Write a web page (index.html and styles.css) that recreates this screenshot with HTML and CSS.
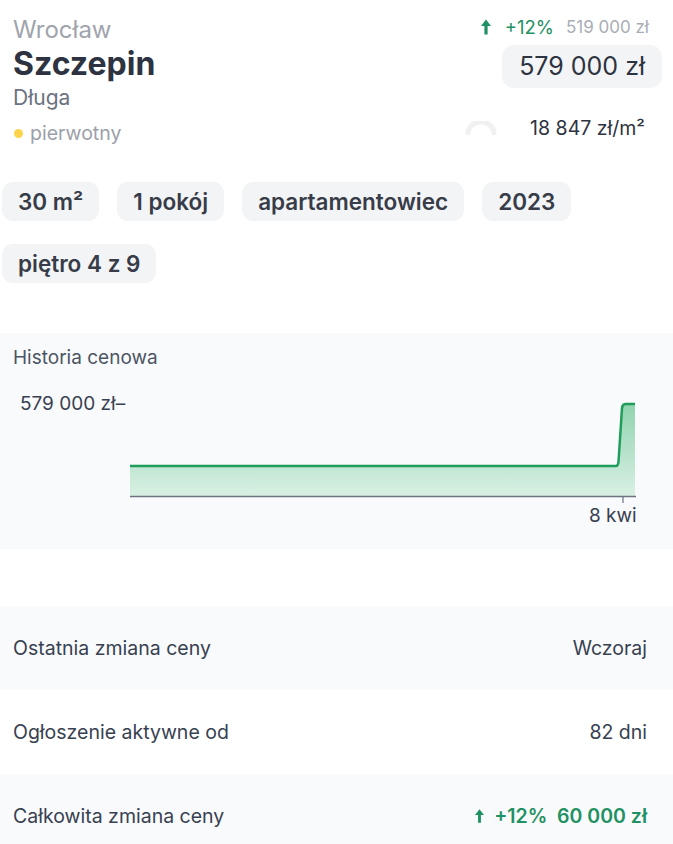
FILE: index.html
```html
<!DOCTYPE html>
<html lang="pl">
<head>
  <meta charset="UTF-8" />
  <title>Szczepin, Długa</title>
  <link rel="stylesheet" href="styles.css">
</head>
<body>

  <!-- Header -->
  <div class="header">
    <div class="place">
      <div class="city">Wrocław</div>
      <div class="district">Szczepin</div>
      <div class="street">Długa</div>
      <div class="market"><span class="dot"></span>pierwotny</div>
    </div>
    <div class="prices">
      <div class="change">
        <span class="up">
          <svg class="arrow" width="10" height="16" viewBox="0 0 10 15"><path d="M5 0 L10 6.5 H6.6 V15 H3.4 V6.5 H0 Z" fill="currentColor"/></svg>
          +12%
        </span>
        <span class="old-price">519 000 zł</span>
      </div>
      <div class="price">579 000 zł</div>
      <div class="per-meter">
        <svg class="spinner" width="32" height="14" viewBox="0 0 32 14">
          <path d="M3 12 A13 11 0 0 1 29 12" fill="none" stroke="#f1f1f3" stroke-width="5" stroke-linecap="round"/>
        </svg>
        <span>18 847 zł/m²</span>
      </div>
    </div>
  </div>

  <!-- Tags -->
  <div class="tags">
    <span class="tag">30 m²</span>
    <span class="tag">1 pokój</span>
    <span class="tag">apartamentowiec</span>
    <span class="tag">2023</span>
    <span class="tag">piętro 4 z 9</span>
  </div>

  <!-- Price history -->
  <div class="history">
    <div class="history-title">Historia cenowa</div>
    <svg class="chart" width="673" height="170" viewBox="0 0 673 170">
      <defs>
        <linearGradient id="fill" x1="0" y1="0" x2="0" y2="1">
          <stop offset="0" stop-color="#91d3af"/>
          <stop offset="1" stop-color="#d9f0e4"/>
        </linearGradient>
      </defs>
      <text x="20" y="40" class="axis-label">579 000 zł–</text>
      <path d="M130 96 L616 96 Q618 96 618.5 92 L622 38 Q622.5 34 626 34 L635 34 L635 126 L130 126 Z" fill="url(#fill)"/>
      <path d="M130 96 L616 96 Q618 96 618.5 92 L622 38 Q622.5 34 626 34 L635 34" fill="none" stroke="#1f9d5c" stroke-width="2.5"/>
      <line x1="130" y1="126.5" x2="636" y2="126.5" stroke="#6b7280" stroke-width="1.5"/>
      <line x1="623" y1="126" x2="623" y2="133" stroke="#6b7280" stroke-width="1.2"/>
      <text x="589" y="152" class="axis-label">8 kwi</text>
    </svg>
  </div>

  <!-- Details -->
  <div class="details">
    <div class="row shaded">
      <span>Ostatnia zmiana ceny</span>
      <span>Wczoraj</span>
    </div>
    <div class="row">
      <span>Ogłoszenie aktywne od</span>
      <span>82 dni</span>
    </div>
    <div class="row shaded">
      <span>Całkowita zmiana ceny</span>
      <span class="up strong">
        <svg class="arrow small" width="9" height="14" viewBox="0 0 10 15"><path d="M5 0 L10 6.5 H6.6 V15 H3.4 V6.5 H0 Z" fill="currentColor"/></svg>
        +12%&nbsp; 60 000 zł
      </span>
    </div>
  </div>

</body>
</html>
```

FILE: styles.css
```css
body {
  margin: 0;
  font-family: Inter, "Noto Sans", sans-serif;
  color: #2d3340;
  background: #fff;
}
.header {
  display: flex;
  justify-content: space-between;
  padding: 15px 11px 0 13px;
}
.city {
  font-size: 24px;
  line-height: 30px;
  color: #a0a4ad;
}
.district {
  font-size: 32px;
  line-height: 38px;
  font-weight: 700;
  color: #2d3340;
}
.street {
  margin-top: 2px;
  font-size: 21px;
  line-height: 26px;
  color: #6b7280;
}
.market {
  display: flex;
  align-items: center;
  margin-top: 10px;
  font-size: 19.5px;
  line-height: 24px;
  color: #9ca0a9;
}
.dot {
  width: 9px;
  height: 9px;
  border-radius: 50%;
  background: #fcd34d;
  margin: 0 7px 0 1px;
}
.prices {
  display: flex;
  flex-direction: column;
  align-items: flex-end;
}
.change {
  display: flex;
  align-items: center;
  font-size: 18.5px;
  line-height: 24px;
  margin-right: 13px;
}
.up {
  color: #1f9163;
  display: inline-flex;
  align-items: center;
}
.arrow {
  margin-right: 14px;
}
.arrow.small {
  margin-right: 10px;
}
.old-price {
  font-size: 17px;
  color: #a9adb5;
  margin-left: 12px;
}
.price {
  margin-top: 6px;
  background: #f3f4f6;
  border-radius: 12px;
  padding: 7px 17px;
  font-size: 25px;
  line-height: 29px;
  color: #2d3340;
}
.per-meter {
  display: flex;
  align-items: center;
  margin-top: 28px;
  margin-right: 17px;
  font-size: 19.5px;
  line-height: 24px;
  color: #2d3340;
}
.spinner {
  margin-right: 33px;
}
.tags {
  display: flex;
  flex-wrap: wrap;
  gap: 23px 18px;
  padding: 37px 0 0 2px;
}
.tag {
  background: #f3f4f6;
  border-radius: 11px;
  padding: 0 16px;
  font-size: 22.5px;
  line-height: 39px;
  font-weight: 600;
  color: #373c48;
}
.history {
  margin-top: 50px;
  background: #f9fafb;
  padding-top: 13px;
  height: 203px;
}
.history-title {
  padding-left: 13px;
  font-size: 19px;
  line-height: 24px;
  color: #4b5563;
}
.chart {
  display: block;
}
.axis-label {
  font-family: Inter, "Noto Sans", sans-serif;
  font-size: 19px;
  fill: #374151;
}
.details {
  margin-top: 57px;
}
.row {
  display: flex;
  justify-content: space-between;
  align-items: center;
  height: 84px;
  padding: 0 26px 0 13px;
  font-size: 19.5px;
  color: #374151;
}
.shaded {
  background: #f9fafb;
}
.strong {
  font-weight: 600;
}
```
